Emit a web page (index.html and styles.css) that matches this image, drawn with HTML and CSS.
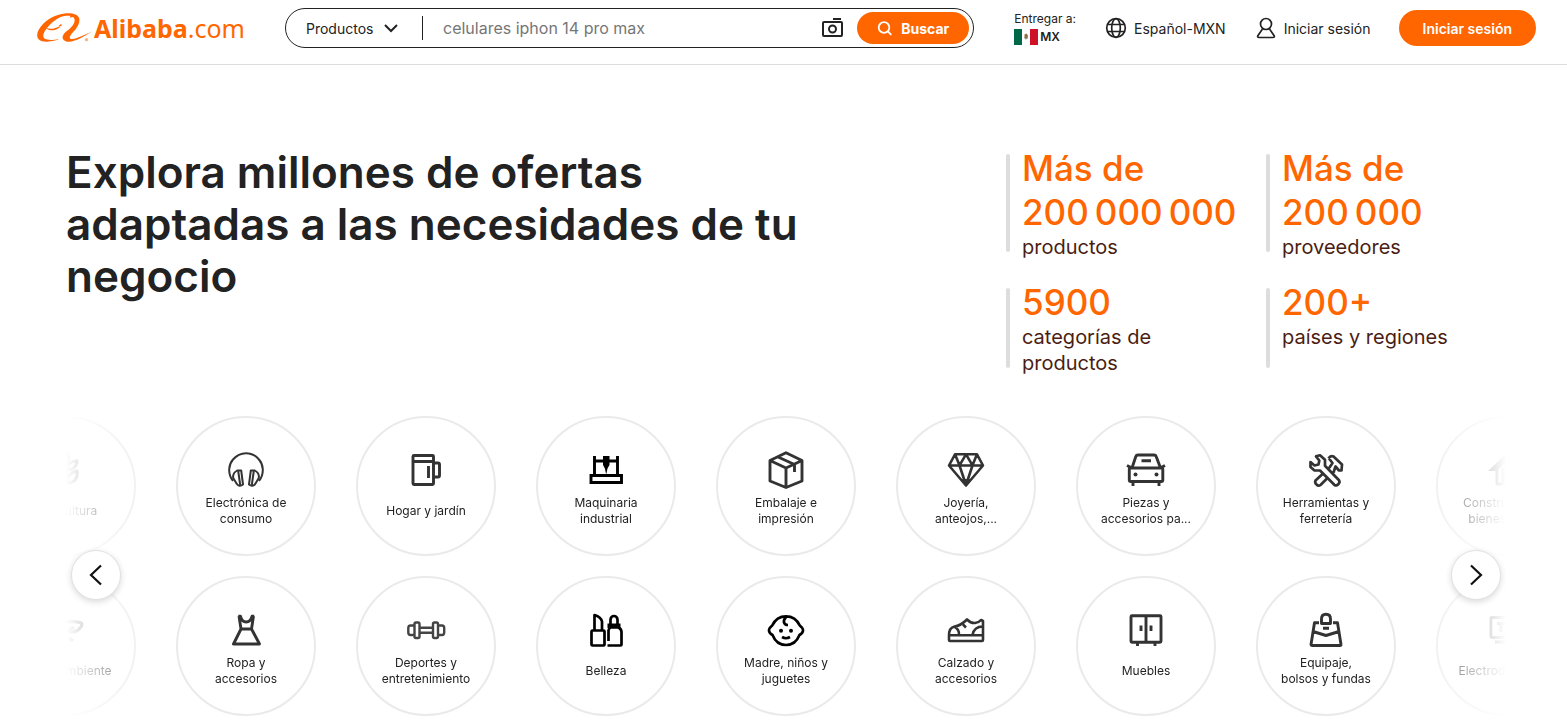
FILE: index.html
```html
<!DOCTYPE html>
<html lang="es">
<head>
<meta charset="utf-8">
<title>Alibaba.com</title>
<link rel="stylesheet" href="styles.css">
</head>
<body>
<header class="header">
  <a class="logo" href="#" aria-label="Alibaba.com">
    <svg class="logo-mark" viewBox="48 40 171 90" aria-hidden="true">
      <path d="M112 46C78 56 50 86 50 107C50 121 62 127 80 126C95 125 108 122 116 118C102 121 88 122 77 119C66 116 66 105 74 93C82 79 98 63 116 54C128 48 142 47 150 49L147 54L157 52C162 54 164 61 161 69C157 79 148 87 138 95C122 108 122 123 140 126C164 129 194 108 216 95C194 105 165 120 152 118C144 116 148 108 156 99C168 88 180 70 176 55C170 39 140 37 112 46Z"/>
      <path d="M78 85C88 90 106 87 120 78C118 86 104 93 92 92C84 91 79 89 78 85ZM114 78L123 72L123 80Z"/>
      <circle cx="198" cy="120" r="5" class="logo-reg"/>
    </svg>
    <span class="logo-name"><b>Alibaba</b>.com</span>
  </a>
  <form class="search">
    <label class="search-type">
      <select aria-label="Tipo de búsqueda"><option>Productos</option></select>
      <svg class="chevron" viewBox="0 0 14 14"><path d="M1 4l6 6 6-6"/></svg>
    </label>
    <input class="search-input" type="text" aria-label="Buscar productos" placeholder="celulares iphon 14 pro max">
    <button class="camera" type="button" aria-label="Buscar por imagen">
      <svg class="line-icon" viewBox="0 0 24 24"><rect x="2" y="6" width="19" height="14" rx="1"/><path d="M12 3h8"/><circle cx="11.500" cy="13" r="3.500"/></svg>
    </button>
    <button class="search-submit" type="submit">
      <svg viewBox="0 0 16 16"><circle cx="7" cy="7.500" r="5.300"/><path d="M11 11.500l3.300 3.300"/></svg>Buscar
    </button>
  </form>
  <nav class="tools">
    <a class="ship" href="#">
      <span>Entregar a:</span>
      <span class="country">
        <svg class="flag" viewBox="0 0 24 16"><path fill="#fff" d="M0 0h24v16H0z"/><path fill="#006847" d="M0 0h8v16H0z"/><path fill="#ce1126" d="M16 0h8v16h-8z"/><path fill="#8f6d42" d="M10.500 5.500l2-1 1.500 2-.5 3-2 1-1-2z"/><path d="M10 8.500q2 3 4 0" stroke="#8ba68a" fill="none"/></svg>
        <b>MX</b>
      </span>
    </a>
    <a class="tool" href="#">
      <svg class="line-icon thin" viewBox="0 0 24 24"><circle cx="12" cy="12" r="9.300"/><ellipse cx="12" cy="12" rx="4.300" ry="9.300"/><path d="M3.500 8.500h17M3.500 15.500h17"/></svg>
      Español-MXN
    </a>
    <a class="tool" href="#">
      <svg class="line-icon thin" viewBox="0 0 24 24"><circle cx="12" cy="8" r="5.500"/><path d="M8.500 13L4 19.500c-.8 1.200-.3 2 1 2h14c1.300 0 1.800-.8 1-2L15.500 13"/></svg>
      Iniciar sesión
    </a>
    <button class="signin" type="button">Iniciar sesión</button>
  </nav>
</header>

<main>
  <section class="hero">
    <h1>Explora millones de ofertas adaptadas a las necesidades de tu negocio</h1>
    <div class="stats">
      <div class="stat"><p class="stat-value">Más de 200&#8239;000&#8239;000</p><p class="stat-label">productos</p></div>
      <div class="stat"><p class="stat-value">Más de 200&#8239;000</p><p class="stat-label">proveedores</p></div>
      <div class="stat"><p class="stat-value">5900</p><p class="stat-label">categorías de productos</p></div>
      <div class="stat"><p class="stat-value">200+</p><p class="stat-label">países y regiones</p></div>
    </div>
  </section>

  <section class="carousel" aria-label="Categorías">
    <div class="track">
      <a class="cat" href="#">
        <svg viewBox="0 0 40 40"><path d="M20 34V7M20 20c-8 0-11-4-11-9 7 0 11 3 11 9zM20 12c-4-4-2-7 0-9 3 3 4 6 0 9zM21 20c0-7 4-9 10-9 0 5-4 9-10 9zM21 33c0-8 4-11 10-12 1 8-3 12-10 12zM19 33c-7 0-10-4-10-11 7 0 10 4 10 11"/></svg>
        <span class="cat-name"><span>Agricultura</span></span>
      </a>
      <a class="cat" href="#">
        <svg viewBox="0 0 40 40"><g stroke-width="2"><path d="M7 31C1 23 3 14 7 9.500c7-8.500 19-8.500 26 0C37 14 39 23 33 31"/><path d="M15.200 20.500l1.800 14c-2.500 2-5 1.500-6.500-1L7.200 28c-.5-3 1.300-6 4-7.500zM24.800 20.500l-1.800 14c2.500 2 5 1.500 6.500-1l3.300-5.500c.5-3-1.300-6-4-7.500z"/><path d="M12.200 21l2 14M27.800 21l-2 14"/></g></svg>
        <span class="cat-name"><span>Electrónica de consumo</span></span>
      </a>
      <a class="cat" href="#">
        <svg viewBox="0 0 40 40"><rect x="7" y="5.500" width="20.500" height="29" rx="1"/><path d="M7 11.500h20.500M22.500 16v12M28 13h4q1.500 0 1.500 1.500v11q0 1.500-1.500 1.500h-4"/></svg>
        <span class="cat-name"><span>Hogar y jardín</span></span>
      </a>
      <a class="cat dark" href="#">
        <svg viewBox="0 0 40 40"><g stroke-linejoin="miter"><path d="M5 25.500h30.500v7H5zM8.500 6v19M31.500 6v19M8.500 11h23"/><path class="fill" d="M17 6h6.500v9l-2 3.500-1.300 6-1.300-6L17 15z"/></g></svg>
        <span class="cat-name"><span>Maquinaria industrial</span></span>
      </a>
      <a class="cat" href="#">
        <svg viewBox="0 0 40 40"><path d="M20 2.800l16 7.700V31l-16 6.500L4 31V10.500zM4 10.500l16 7.500 16-7.500M20 18v19M11.500 6.800L28.500 14.500V22"/></svg>
        <span class="cat-name"><span>Embalaje e impresión</span></span>
      </a>
      <a class="cat" href="#">
        <svg viewBox="0 0 40 40"><g stroke-width="2.600"><path d="M9 4.300h22L37 15.500 20 35.500 3 15.500zM3 15.500h34M9 4.300l4.500 11L20 4.300l6.500 11L31 4.300M13.500 15.500L20 35l6.500-19.500"/><path class="fill" d="M16 29h8l-4 7z"/></g></svg>
        <span class="cat-name"><span>Joyería, anteojos,...</span></span>
      </a>
      <a class="cat" href="#">
        <svg viewBox="0 0 40 40"><path d="M6 18l3.800-11.500Q10.300 5 12 5h16q1.700 0 2.200 1.500L34.500 18M15.500 10.800H25M1 15.500l3.500 1.700M39 15.500l-3.500 1.700M7 32v4M33 32v4"/><rect x="3.300" y="18" width="33.500" height="13.500" rx="1"/><circle class="fill" cx="9.500" cy="24.500" r="2"/><circle class="fill" cx="30.500" cy="24.500" r="2"/></svg>
        <span class="cat-name"><span>Piezas y accesorios pa...</span></span>
      </a>
      <a class="cat" href="#">
        <svg viewBox="0 0 40 40"><g stroke-width="2.700"><path class="paper" d="M23.500 17.500L9.500 30.500q-1 2 1 4t4 .5l14-14M23 8.500l3.500 4.500-3 4.500M22.500 8.500q2-3.500 5-2l8.500 8-.5 6H33l-3.500-4-1.500 4.500"/><path class="paper" d="M10 6.300l4-1 5 4.500v6l14 14.500q1.300 2-.7 4t-4 .5L14 20.500H8.500L4.500 17v-5l4 3.500 4-1 .8-4z"/></g></svg>
        <span class="cat-name"><span>Herramientas y ferretería</span></span>
      </a>
      <a class="cat" href="#">
        <svg viewBox="0 0 40 40"><path class="fill" d="M2 21L20 4l18 17h-6l-12-9-9 9z"/><path d="M11 20v14h18V20M17 18v16M17 22h8M17 28h8"/></svg>
        <span class="cat-name"><span>Construcción y bienes raíces</span></span>
      </a>

      <a class="cat" href="#">
        <svg viewBox="0 0 40 40"><path stroke-width="3.200" d="M11 28C5 18 17 9 34 12.500c5 1-1 9-8 9.500-4 0-4-3 2-4.500M23 28l4 3"/></svg>
        <span class="cat-name"><span>Medio ambiente</span></span>
      </a>
      <a class="cat" href="#">
        <svg viewBox="0 0 40 40"><path d="M13 6l2 13h10.500L27.500 6M12.300 6.300h2.200Q16 12 20.200 12T26 6.300h2.200M15 19L7.500 34h26L25.500 19"/></svg>
        <span class="cat-name"><span>Ropa y accesorios</span></span>
      </a>
      <a class="cat soft" href="#">
        <svg viewBox="0 0 40 40"><g stroke-width="2.400"><rect x="8.500" y="12.500" width="5" height="15.500" rx="1.500"/><rect x="27" y="12.500" width="5" height="15.500" rx="1.500"/><path d="M8 15.500H4.500Q2.300 15.500 2.300 18v4.500Q2.300 25 4.500 25H8M32.500 15.500H36q2.200 0 2.200 2.500v4.500Q38.200 25 36 25h-3.500M14 17.800h12.500M14 22.800h12.500"/></g></svg>
        <span class="cat-name"><span>Deportes y entretenimiento</span></span>
      </a>
      <a class="cat dark" href="#">
        <svg viewBox="0 0 40 40"><g stroke-width="2.700"><rect x="5.500" y="20.500" width="13" height="15" rx="1"/><path d="M8.500 20V5Q15 7 16 11.500V20M21.500 35.500h13q1 0 1-1V22q0-3-3-4.500h-8q-2 1.500-2 3V31M24.500 14.500V9.500Q25 6 28 6t3.500 3.500v5"/><path class="fill" d="M21.500 13.500h13v4.500h-13z"/></g></svg>
        <span class="cat-name"><span>Belleza</span></span>
      </a>
      <a class="cat dark" href="#">
        <svg viewBox="0 0 40 40"><g stroke-width="2.700"><path d="M6.200 15.500Q10.500 6.300 20 6.300T33.800 15.500Q37 18 37 20.500T33.500 25Q29.500 35 20 35T6.500 25Q3 23 3 20.500T6.200 15.500zM20 7.500c-3.500 3-2.500 7.500 2 7.500"/><path d="M16 27q4 2.500 8 0"/><circle class="fill" cx="15" cy="20.800" r="2"/><circle class="fill" cx="25" cy="20.800" r="2"/></g></svg>
        <span class="cat-name"><span>Madre, niños y juguetes</span></span>
      </a>
      <a class="cat" href="#">
        <svg viewBox="0 0 40 40"><g stroke-width="2.600"><path d="M3 25.500Q3 18 8 16.800 15 15.500 21 9.500q4 4 8 3.500 4-.5 6-3l2 1V30q0 1-1 1H4q-1 0-1-1zM3 25.200h34M9 17q4.500 3 4 8M17 14.500l3 3M37 16.500q-9 0-10.500 8.500"/></g></svg>
        <span class="cat-name"><span>Calzado y accesorios</span></span>
      </a>
      <a class="cat" href="#">
        <svg viewBox="0 0 40 40"><rect x="5" y="5.700" width="30" height="26.500" rx="1"/><path d="M20 6v26M15 15.500v5.500M25 15.500v5.500M11.500 32v4M29 32v4"/></svg>
        <span class="cat-name"><span>Muebles</span></span>
      </a>
      <a class="cat" href="#">
        <svg viewBox="0 0 40 40"><path d="M13 12.800H8.500L5 34.500q0 1 1 1h28q1.200 0 1-1l-3.500-21.700H27M7 21.500l13 4 13-4M17 18.300h6M15.500 13.500V9Q15.500 4.200 20 4.200T24.500 9v4.500z"/></svg>
        <span class="cat-name"><span>Equipaje,<br>bolsos y fundas</span></span>
      </a>
      <a class="cat" href="#">
        <svg viewBox="0 0 40 40"><rect x="5" y="7.500" width="30" height="20" rx="1"/><path d="M9 32h22M11 13.500h9M15 13v9M23 13l3 9 3-9"/></svg>
        <span class="cat-name"><span>Electrodomésti...</span></span>
      </a>
    </div>
    <button class="arrow prev" type="button" aria-label="Anterior"><svg viewBox="0 0 24 24"><path d="M17 2.500L7 12l10 9.500"/></svg></button>
    <button class="arrow next" type="button" aria-label="Siguiente"><svg viewBox="0 0 24 24"><path d="M7 2.500L17 12 7 21.500"/></svg></button>
  </section>
</main>
</body>
</html>
```

FILE: styles.css
```css
* { box-sizing: border-box; }

body {
  margin: 0;
  background: #fff;
  color: #222;
  font-family: Inter, "Liberation Sans", sans-serif;
  font-size: 14px;
}

a { color: inherit; text-decoration: none; }
button, input, select { font: inherit; color: inherit; }
button { border: 0; padding: 0; background: none; cursor: pointer; }

.header {
  display: flex;
  align-items: center;
  height: 65px;
  padding: 0 31px 8px 36px;
  border-bottom: 1px solid #ddd;
}

/* Logo */
.logo { display: flex; align-items: center; color: #ff6600; }
.logo-mark { width: 58px; height: 30px; fill: #ff6600; }
.logo-reg { opacity: .5; }
.logo-name { font-family: "Noto Sans", "Open Sans", sans-serif; font-size: 25px; line-height: 30px; }

/* Search */
.search {
  display: flex;
  flex: 1;
  align-items: center;
  height: 40px;
  margin: 0 40px;
  padding-right: 4px;
  border: 1px solid #222;
  border-radius: 20px;
}
.search-type {
  position: relative;
  display: flex;
  align-items: center;
  width: 137px;
  height: 24px;
  border-right: 1px solid #222;
}
.search-type select {
  width: 100%;
  height: 24px;
  padding: 0 0 0 20px;
  border: 0;
  background: none;
  appearance: none;
}
.chevron {
  position: absolute;
  right: 24px;
  width: 14px;
  height: 14px;
  fill: none;
  stroke: #222;
  stroke-width: 2;
  pointer-events: none;
}
.search-input {
  flex: 1;
  min-width: 0;
  padding: 0 20px;
  border: 0;
  outline: 0;
  background: none;
  font-size: 16px;
}
.search-input::placeholder { color: #767676; opacity: 1; }
.camera { width: 24px; height: 24px; margin-right: 12px; }
.line-icon { display: block; width: 24px; height: 24px; fill: none; stroke: #222; stroke-width: 2; }
.line-icon.thin { stroke-width: 1.7; }
.search-submit {
  display: flex;
  align-items: center;
  gap: 8px;
  height: 32px;
  padding: 0 20px;
  border-radius: 16px;
  background: #ff6600;
  color: #fff;
  font-weight: 700;
}
.search-submit svg { width: 16px; height: 16px; fill: none; stroke: #fff; stroke-width: 1.8; }

/* Header tools */
.tools { display: flex; align-items: center; gap: 28px; white-space: nowrap; }
.ship { font-size: 12px; line-height: 18px; }
.ship > span { display: block; }
.ship .country { display: flex; align-items: center; gap: 2px; }
.country b { font-weight: 600; }
.flag { width: 24px; height: 16px; }
.tool { display: flex; align-items: center; gap: 6px; }
.signin {
  height: 36px;
  padding: 0 24px;
  border-radius: 18px;
  background: #ff6600;
  color: #fff;
  font-weight: 600;
}

/* Hero */
.hero {
  display: flex;
  justify-content: space-between;
  padding: 81px 41px 0 66px;
}
h1 {
  max-width: 760px;
  margin: 0;
  font-size: 44px;
  line-height: 52px;
  font-weight: 600;
}
.stats {
  display: grid;
  grid-template-columns: 260px 260px;
  row-gap: 20px;
}
.stat { position: relative; padding: 0 24px 0 16px; }
.stat::before {
  content: "";
  position: absolute;
  left: 0;
  top: 8px;
  bottom: 8px;
  width: 4px;
  border-radius: 2px;
  background: #ddd;
}
.stat p { margin: 0; }
.stat-value { color: #ff6600; font-size: 35px; line-height: 44px; font-weight: 500; }
.stat-label { max-width: 180px; color: #4b1d12; font-size: 20px; line-height: 26px; }

/* Category carousel */
.carousel { position: relative; margin: 40px 61px 0 66px; }
.track {
  display: grid;
  grid-template-columns: repeat(9, 140px);
  justify-content: center;
  gap: 20px 40px;
  overflow: hidden;
  -webkit-mask-image: linear-gradient(to right, transparent, #000 108px, #000 calc(100% - 108px), transparent);
  mask-image: linear-gradient(to right, transparent, #000 108px, #000 calc(100% - 108px), transparent);
}
.cat {
  display: flex;
  flex-direction: column;
  align-items: center;
  gap: 4px;
  height: 140px;
  padding-top: 32px;
  border: 2px solid #eaeaea;
  border-radius: 50%;
}
.cat svg {
  width: 40px;
  height: 40px;
  fill: none;
  stroke: #333;
  stroke-width: 2.9;
  stroke-linejoin: round;
}
.cat .fill { fill: #333; stroke: none; }
.cat .paper { fill: #fff; }
.cat.dark svg { stroke: #000; }
.cat.dark .fill { fill: #000; }
.cat.soft svg { stroke: #444; }
.cat-name {
  display: flex;
  align-items: center;
  justify-content: center;
  width: 94px;
  height: 34px;
  font-size: 12px;
  line-height: 16px;
  text-align: center;
}

.arrow {
  position: absolute;
  top: 135px;
  display: flex;
  align-items: center;
  justify-content: center;
  width: 48px;
  height: 48px;
  border-radius: 50%;
  background: #fff;
  box-shadow: 0 0 0 1px #e2e2e2, 0 2px 6px 1px rgba(0, 0, 0, .15);
}
.arrow svg { width: 24px; height: 24px; fill: none; stroke: #111; stroke-width: 2.2; }
.prev { left: 6px; }
.next { right: 6px; }
```
